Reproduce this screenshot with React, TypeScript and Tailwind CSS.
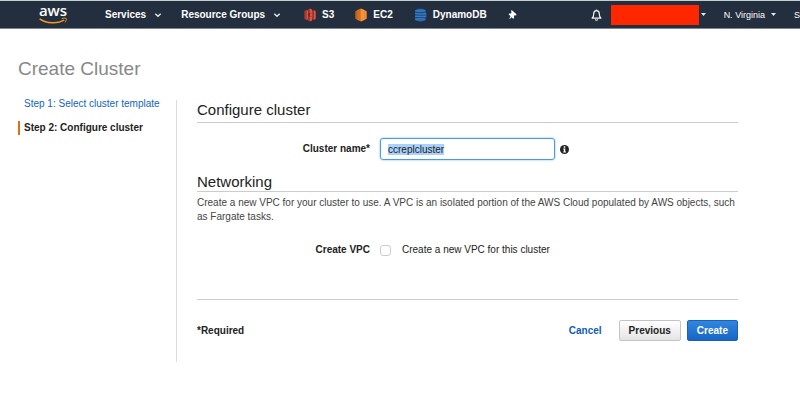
import { useEffect, useRef } from 'react';
import type { ReactNode } from 'react';

function AwsLogo() {
  return (
    <a href="#" aria-label="aws" className="w-7 shrink-0 flex flex-col items-center font-['Open_Sans',sans-serif]">
      <span className="text-[15px] leading-[11px] font-semibold text-white">aws</span>
      <svg className="w-7 h-2" viewBox="0 0 28 8" fill="none" stroke="#f7981f">
        <path d="M0.6 2.8C8 7.8 18.5 8 25.2 4.2" strokeWidth="1.5" />
        <path d="M22.8 2.5C25 1.9 27.2 2 27.3 2.6C27.5 3.6 26.9 5.2 26 6.4" strokeWidth="1" />
      </svg>
    </a>
  );
}

function Chevron() {
  return (
    <svg className="w-2 h-2" viewBox="0 0 8 8" fill="none" stroke="#e6e8ea" strokeWidth="1.4">
      <path d="M1.3 2.8L4 5.3L6.7 2.8" />
    </svg>
  );
}

function Caret() {
  return (
    <svg className="w-[5px] h-[5px]" viewBox="0 0 5 5" fill="#e6e8ea">
      <path d="M0 1h5L2.5 4z" />
    </svg>
  );
}

function S3Icon() {
  return (
    <svg className="w-3 h-[14px]" viewBox="0 0 12 14">
      <path d="M0.3 3L2.4 2V12L0.3 11z" fill="#a83a2c" />
      <path d="M2.4 2L4.2 2.8V11.2L2.4 12z" fill="#e05243" />
      <path d="M11.7 3L9.6 2V12L11.7 11z" fill="#e05243" />
      <path d="M9.6 2L8 2.8V11.2L9.6 12z" fill="#a83a2c" />
      <path d="M6 0.4L4.2 1.3V5.4H6z" fill="#a83a2c" />
      <path d="M6 0.4L8 1.4V5.4H6z" fill="#e05243" />
      <path d="M4.2 5.4H6V8.6H4.2z" fill="#7d2b1f" />
      <path d="M6 5.4H8V8.6H6z" fill="#e05243" />
      <path d="M6 13.6L4.2 12.7V8.6H6z" fill="#a83a2c" />
      <path d="M6 13.6L8 12.6V8.6H6z" fill="#e05243" />
    </svg>
  );
}

function Ec2Icon() {
  return (
    <svg className="w-3 h-[14px]" viewBox="0 0 12 14">
      <path d="M0.3 3.2L2 2.4V11.6L0.3 10.8z" fill="#c4651b" />
      <path d="M2 2.3L6 0.5V13.5L2 11.7z" fill="#e07b25" />
      <path d="M6 0.5L10 2.3V11.7L6 13.5z" fill="#f7913a" />
      <path d="M10 2.4L11.7 3.2V10.8L10 11.6z" fill="#f7913a" />
      <path d="M2.2 2.3V11.7M4 1.6V12.4" stroke="#a8530f" strokeWidth="0.5" />
      <path d="M9.8 2.3V11.7" stroke="#d9741f" strokeWidth="0.5" />
    </svg>
  );
}

function DynamoIcon() {
  return (
    <svg className="w-[13px] h-[14px]" viewBox="0 0 13 14">
      <path d="M1 2.2C3 0.1 10 0.1 11.6 2.2V11.8C10 13.9 3 13.9 1 11.8z" fill="#2968b0" />
      <path d="M9.6 3.8L12.4 5V9L9.6 10.2z" fill="#2e73b8" />
      <path d="M1 4C4 4.9 8.6 4.9 11.6 4M1 7H12.4M1 10C4 9.1 8.6 9.1 11.6 10" fill="none" stroke="#1b3f66" strokeWidth="0.8" />
      <path d="M1.4 2.4C4 3.4 8.6 3.4 11.3 2.4M1.4 5.7C4 6.2 8.6 6.2 11.3 5.7M1.4 8.4H11.3M1.4 11.4C4 10.6 8.6 10.6 11.3 11.4" fill="none" stroke="#4586cc" strokeWidth="0.7" />
    </svg>
  );
}

function PinIcon() {
  return (
    <svg className="w-[9px] h-[10px]" viewBox="0 0 9 10" fill="#ffffff">
      <path d="M3 0.6L3.9 0.3L8.5 4.3L8.1 5.5L6.6 5.3L6 6L6.1 8.2L5.2 8.8L3.6 7.2L1.9 8.9L1.4 8.5L2.5 6L0.6 4.4L1.1 3.5L2.9 3.4L3.5 2.7z" />
    </svg>
  );
}

function BellIcon() {
  return (
    <svg className="w-[11px] h-3" viewBox="0 0 11 12" fill="none" stroke="#f2f3f3">
      <path d="M5.5 0.5V1.6M0.6 9.2H10.4M1.2 9C2.5 7.8 2.7 6.6 2.7 4.9C2.7 2.9 3.8 1.7 5.5 1.7S8.3 2.9 8.3 4.9C8.3 6.6 8.5 7.8 9.8 9" strokeWidth="1.2" />
      <path d="M4.4 10.2C4.5 11.6 6.5 11.6 6.6 10.2" strokeWidth="1.1" />
    </svg>
  );
}

function InfoIcon() {
  return (
    <svg className="w-[9px] h-[9px]" viewBox="0 0 9 9">
      <circle cx="4.5" cy="4.5" r="4.5" fill="#222222" />
      <path d="M3.7 1.3h1.6v1.4H3.7zM3.2 3.4h2.1v3h0.6v1H3.2v-1h0.6v-2H3.2z" fill="#ffffff" />
    </svg>
  );
}

function Shortcut({ icon, label }: { icon: ReactNode; label: string }) {
  return (
    <a href="#" className="flex items-center gap-[6px]">
      {icon}
      {label}
    </a>
  );
}

function NavBar() {
  return (
    <nav className="flex items-center h-[29px] border-t border-[#c3cfcf] border-b border-b-[#7d868e] bg-[#232f3e] pl-[39px] text-[10px] font-bold text-white whitespace-nowrap overflow-hidden">
      <AwsLogo />
      <button className="ml-[38px] flex items-center gap-2">
        Services <Chevron />
      </button>
      <button className="ml-[19px] flex items-center gap-2">
        Resource Groups <Chevron />
      </button>
      <div className="ml-[23px] flex items-center gap-[21px]">
        <Shortcut icon={<S3Icon />} label="S3" />
        <Shortcut icon={<Ec2Icon />} label="EC2" />
        <Shortcut icon={<DynamoIcon />} label="DynamoDB" />
        <button aria-label="Edit shortcuts">
          <PinIcon />
        </button>
      </div>
      <div className="ml-auto flex items-center shrink-0 text-[9px] font-normal">
        <button aria-label="Notifications">
          <BellIcon />
        </button>
        <button aria-label="Account" className="ml-[9px] flex items-center gap-[2px]">
          <span className="w-[88px] h-5 bg-[#ff2600]" />
          <Caret />
        </button>
        <button className="ml-[18px] flex items-center gap-[6px]">
          N. Virginia <Caret />
        </button>
        <button className="ml-[18px]">S</button>
      </div>
    </nav>
  );
}

export default function App() {
  const nameRef = useRef<HTMLInputElement>(null);

  useEffect(() => {
    nameRef.current?.focus();
    nameRef.current?.select();
  }, []);

  return (
    <div className="bg-white font-['Liberation_Sans',Arial,sans-serif] text-[10px] leading-[14px] text-[#222222]">
      <NavBar />
      <main className="pt-7 pr-[62px] pl-[18px]">
        <h1 className="text-[19px] leading-6 text-[#888888]">Create Cluster</h1>

        <div className="mt-4 flex">
          <ol className="w-[158px] shrink-0 space-y-[10px]">
            <li className="border-l-2 border-transparent pl-[4px]">
              <a href="#" className="text-[#0f66bd]">Step 1: Select cluster template</a>
            </li>
            <li className="border-l-2 border-[#e07012] pl-[4px] font-bold">Step 2: Configure cluster</li>
          </ol>

          <form className="flex-1 min-w-0 mt-[3px] border-l border-[#dddddd] pl-5 pb-[21px]" onSubmit={e => e.preventDefault()}>
            <h2 className="border-b border-[#cccccc] pb-[2px] text-[15px] leading-5">Configure cluster</h2>

            <div className="mt-[15px] flex items-center">
              <label htmlFor="cluster-name" className="w-[173px] text-right font-bold">Cluster name*</label>
              <input
                id="cluster-name"
                ref={nameRef}
                type="text"
                defaultValue="ccreplcluster"
                className="ml-[10px] w-[175px] h-[22px] rounded-[3px] border border-[#4a9ae8] px-[7px] outline-none shadow-[0_0_2px_#66afe9] selection:bg-[#a8d1fb] selection:text-[#222222]"
              />
              <button type="button" aria-label="Cluster name info" className="ml-[5px]">
                <InfoIcon />
              </button>
            </div>

            <h2 className="mt-[13px] border-b border-[#cccccc] text-[15px] leading-[18px]">Networking</h2>
            <p className="mt-1 text-[#444444]">
              Create a new VPC for your cluster to use. A VPC is an isolated portion of the AWS Cloud populated by AWS objects, such as Fargate tasks.
            </p>

            <div className="mt-[19px] flex items-center">
              <span className="w-[173px] text-right font-bold">Create VPC</span>
              <input
                id="create-vpc"
                type="checkbox"
                className="ml-[10px] w-[11px] h-[11px] appearance-none rounded-[3px] border border-[#cccccc] bg-white checked:bg-[#2f86e0]"
              />
              <label htmlFor="create-vpc" className="ml-[11px]">Create a new VPC for this cluster</label>
            </div>

            <div className="mt-[42px] border-t border-[#cccccc] pt-5 flex items-center">
              <span className="font-bold">*Required</span>
              <a href="#" className="ml-auto font-bold text-[#0f5cb5]">Cancel</a>
              <button type="button" className="ml-[17px] h-[21px] rounded-[2px] border border-[#c4c4c4] bg-linear-to-b from-white to-[#e4e4e4] px-[9px] font-bold">
                Previous
              </button>
              <button type="submit" className="ml-[6px] h-[21px] rounded-[2px] border border-[#1a62b8] bg-linear-to-b from-[#2f86e0] to-[#1766c4] px-[9px] font-bold text-white">
                Create
              </button>
            </div>
          </form>
        </div>
      </main>
    </div>
  );
}
